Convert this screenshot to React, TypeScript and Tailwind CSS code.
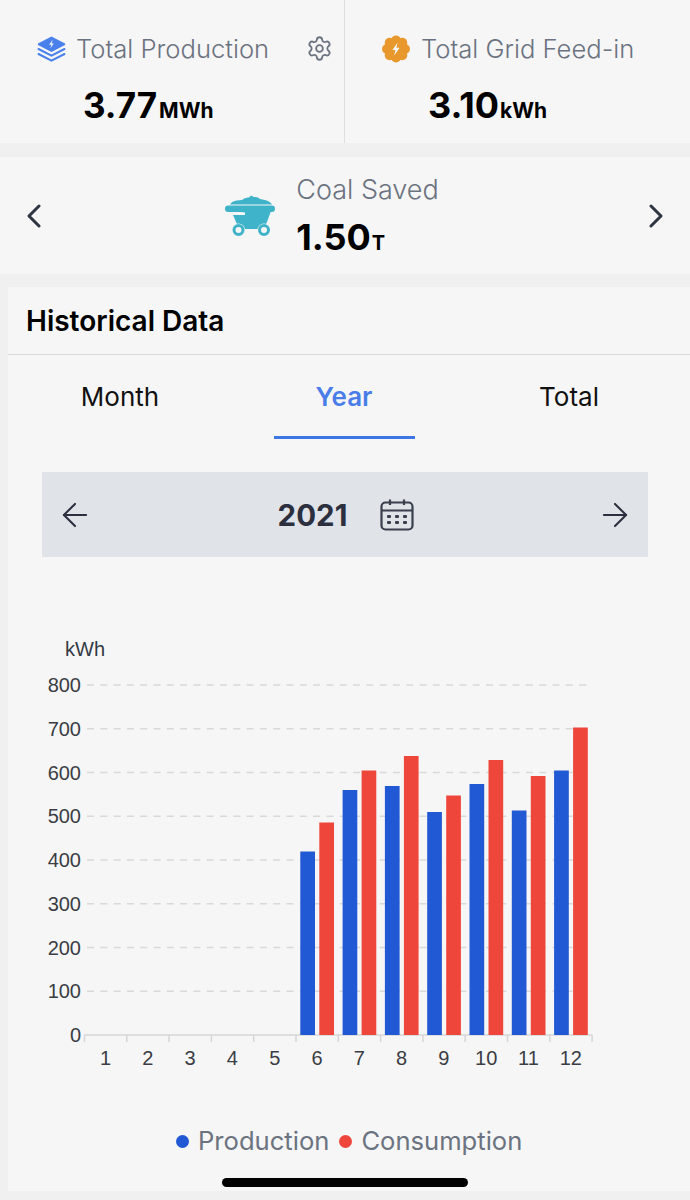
import { ArrowLeft, ArrowRight, Settings } from "lucide-react";

const yLabels = [800, 700, 600, 500, 400, 300, 200, 100, 0];
const months = [1, 2, 3, 4, 5, 6, 7, 8, 9, 10, 11, 12];

// bar tops in page pixels, month 6 to 12
const bars = [
  { production: 851.5, consumption: 822.5 },
  { production: 790, consumption: 770.5 },
  { production: 786, consumption: 756 },
  { production: 812, consumption: 795.5 },
  { production: 784, consumption: 760 },
  { production: 810.5, consumption: 776 },
  { production: 770.5, consumption: 727.5 },
];

const LayersIcon = () => (
  <svg width="29" height="26" viewBox="0 0 29 26">
    <path d="M14.5 0.5 L28 7.5 Q28.5 8.5 28 9 L14.5 16 L1 9 Q0.5 8.5 1 7.5 Z" fill="#4a80ec" />
    <path d="M15.8 3.5 L12.2 8.8 H14.4 L13.2 12.6 L16.8 7.4 H14.6 Z" fill="#f6f6f6" />
    <path d="M1.5 13 L14.5 19.6 L27.5 13" fill="none" stroke="#4a80ec" strokeWidth="2" strokeLinecap="round" />
    <path d="M1.5 18 L14.5 24.6 L27.5 18" fill="none" stroke="#4a80ec" strokeWidth="2" strokeLinecap="round" />
  </svg>
);

const BadgeIcon = () => (
  <svg width="30" height="28" viewBox="0 0 30 28">
    <g fill="#e8982c">
      <circle cx="15" cy="14" r="11" />
      <circle cx="15" cy="5.5" r="5" />
      <circle cx="15" cy="22.5" r="5" />
      <circle cx="6" cy="14" r="5" />
      <circle cx="24" cy="14" r="5" />
      <circle cx="8.7" cy="7.7" r="5" />
      <circle cx="21.3" cy="7.7" r="5" />
      <circle cx="8.7" cy="20.3" r="5" />
      <circle cx="21.3" cy="20.3" r="5" />
    </g>
    <path d="M16.6 7.5 L11.4 15 H14.4 L13.2 20.5 L18.6 12.8 H15.4 Z" fill="#f6f6f6" />
  </svg>
);

const CoalCartIcon = () => (
  <svg width="50" height="42" viewBox="0 0 50 42">
    <path d="M5 9.5 Q7 6 12 5.5 L17 5 Q20 2 24 2.5 L26 0.5 L29 2 Q33 1.5 35 4 L40 5 Q45 6 47 9.5 Z" fill="#3fb3c9" />
    <rect x="0" y="10.5" width="50" height="6.5" rx="3.2" fill="#3fb3c9" />
    <path d="M7 16 H46 L42 27 Q39 34 34 34 H18 Q14 34 11 27 L8 20 H20 V17.5 Z" fill="#3fb3c9" />
    <path d="M3 19.2 H20" stroke="#f6f6f6" strokeWidth="1.2" />
    <circle cx="13.5" cy="35" r="6.5" fill="#f6f6f6" />
    <circle cx="39" cy="35" r="6.5" fill="#f6f6f6" />
    <circle cx="13.5" cy="35" r="4.5" fill="#f6f6f6" stroke="#3fb3c9" strokeWidth="3" />
    <circle cx="39" cy="35" r="4.5" fill="#f6f6f6" stroke="#3fb3c9" strokeWidth="3" />
  </svg>
);

const CalendarIcon = () => (
  <svg width="34" height="32" viewBox="0 0 34 32" fill="none" stroke="#3a3f4e" strokeWidth="2.2">
    <rect x="1.5" y="3.5" width="31" height="27" rx="4" />
    <path d="M1.5 11.5 H32.5 M10 0.5 V6 M24 0.5 V6" />
    <g fill="#3a3f4e" stroke="none">
      <rect x="7" y="16" width="4" height="3" rx="1" />
      <rect x="15" y="16" width="4" height="3" rx="1" />
      <rect x="23" y="16" width="4" height="3" rx="1" />
      <rect x="7" y="22" width="4" height="3" rx="1" />
      <rect x="15" y="22" width="4" height="3" rx="1" />
      <rect x="23" y="22" width="4" height="3" rx="1" />
    </g>
  </svg>
);

const Chevron = ({ d }: { d: string }) => (
  <svg width="16" height="24" viewBox="0 0 16 24" fill="none" stroke="#2f3542" strokeWidth="3" strokeLinecap="round" strokeLinejoin="round">
    <path d={d} />
  </svg>
);

// viewBox uses page coordinates so the numbers read the same as the screenshot
const Chart = () => (
  <svg width="682" height="490" viewBox="8 630 682 490" className="block font-['Liberation_Sans',sans-serif]">
    <text x="65" y="656" fontSize="20" fill="#333a44">kWh</text>
    {yLabels.map((label, i) => {
      const y = 685 + i * 43.75;
      return (
        <g key={label}>
          <text x="81" y={y + 7} fontSize="20" textAnchor="end" fill="#3a3d44">{label}</text>
          {label !== 0 && (
            <line x1="87" x2="587" y1={y} y2={y} stroke="#d9d9d9" strokeWidth="1.5" strokeDasharray="7 6.3" />
          )}
        </g>
      );
    })}
    <line x1="84" x2="592.5" y1="1035" y2="1035" stroke="#d6d6d6" strokeWidth="1.5" />
    {[...months, 13].map((m) => {
      const x = 84.5 + (m - 1) * 42.3;
      return <line key={m} x1={x} x2={x} y1="1035" y2="1042" stroke="#d6d6d6" strokeWidth="1.5" />;
    })}
    {months.map((m) => (
      <text key={m} x={105.5 + (m - 1) * 42.3} y="1065" fontSize="20" textAnchor="middle" fill="#3a3d44">{m}</text>
    ))}
    {bars.map((bar, i) => {
      const x = 300.3 + i * 42.3;
      return (
        <g key={i}>
          <rect x={x} y={bar.production} width="14.7" height={1035 - bar.production} fill="#2158d4" />
          <rect x={x + 19} y={bar.consumption} width="14.7" height={1035 - bar.consumption} fill="#ef463c" />
        </g>
      );
    })}
  </svg>
);

export default function App() {
  return (
    <div className="relative flex h-[1200px] w-[690px] flex-col overflow-hidden bg-[#f0f0f0] font-['Inter',sans-serif]">
      <div className="grid h-[143px] grid-cols-2 bg-[#f6f6f6]">
        <div className="relative border-r border-[#dedede] pl-[37px] pt-[31px]">
          <div className="flex h-[36px] items-center gap-[10px]">
            <LayersIcon />
            <span className="text-[25.6px] font-light text-[#6b7280]">Total Production</span>
          </div>
          <div className="mt-[16px] flex items-baseline pl-[46px] font-bold text-black">
            <span className="text-[35px] leading-[44px]">3.77</span>
            <span className="ml-[2px] text-[21px]">MWh</span>
          </div>
          <Settings className="absolute left-[306px] top-[35px] h-[27px] w-[27px] text-[#6b7280]" strokeWidth={1.6} />
        </div>
        <div className="pl-[36px] pt-[31px]">
          <div className="flex h-[36px] items-center gap-[10px]">
            <BadgeIcon />
            <span className="text-[25.6px] font-light text-[#6b7280]">Total Grid Feed-in</span>
          </div>
          <div className="mt-[16px] flex items-baseline pl-[47px] font-bold text-black">
            <span className="text-[36px] leading-[44px]">3.10</span>
            <span className="ml-[1px] text-[21px]">kWh</span>
          </div>
        </div>
      </div>

      <div className="mt-[14px] flex h-[117px] items-center justify-between bg-[#f6f6f6] px-[26px]">
        <Chevron d="M13 2 L3 12 L13 22" />
        <div className="flex items-center gap-[21px] pr-[26px]">
          <CoalCartIcon />
          <div className="flex flex-col">
            <span className="text-[27px] font-light leading-[36px] text-[#6b7280]">Coal Saved</span>
            <div className="mt-[7px] flex items-baseline font-bold text-black">
              <span className="text-[36px] leading-[44px]">1.50</span>
              <span className="ml-[1px] text-[20px]">T</span>
            </div>
          </div>
        </div>
        <Chevron d="M3 2 L13 12 L3 22" />
      </div>

      <div className="ml-2 mt-[13px] flex h-[904px] flex-col bg-[#f6f6f6]">
        <div className="flex h-[68px] items-center border-b border-[#dadada] pl-[18px] text-[28px] font-semibold text-black">
          Historical Data
        </div>
        <div className="relative flex h-[83px] text-[26px] text-[#111111]">
          <div className="flex w-[224px] items-center justify-center pb-[1px]">Month</div>
          <div className="flex w-[224px] items-center justify-center pb-[1px] font-semibold text-[#4a7de8]">Year</div>
          <div className="flex w-[226px] items-center justify-center pb-[1px]">Total</div>
          <div className="absolute left-[266px] top-[81px] h-[3px] w-[141px] bg-[#3f76e6]" />
        </div>
        <div className="ml-[34px] mt-[34px] flex h-[85px] w-[606px] items-center justify-between bg-[#e0e3e8] px-[14px]">
          <ArrowLeft className="h-[38px] w-[38px] text-[#2b2f3e]" strokeWidth={1.3} strokeLinecap="round" />
          <div className="flex items-center gap-[33px] pl-[2px] pt-[1px]">
            <span className="text-[29.5px] font-bold text-[#2b2f3e]">2021</span>
            <CalendarIcon />
          </div>
          <ArrowRight className="h-[38px] w-[38px] text-[#2b2f3e]" strokeWidth={1.3} strokeLinecap="round" />
        </div>
        <div className="mt-[73px]">
          <Chart />
        </div>
        <div className="flex h-[42px] items-center pl-[168px] text-[25.6px] text-[#6b7280]">
          <span className="h-[13px] w-[13px] rounded-full bg-[#2158d4]" />
          <span className="ml-[9px]">Production</span>
          <span className="ml-[10px] h-[13px] w-[13px] rounded-full bg-[#ef463c]" />
          <span className="ml-[9px]">Consumption</span>
        </div>
      </div>

      <div className="absolute left-[222px] top-[1178px] h-[9px] w-[246px] rounded-full bg-black" />
    </div>
  );
}
